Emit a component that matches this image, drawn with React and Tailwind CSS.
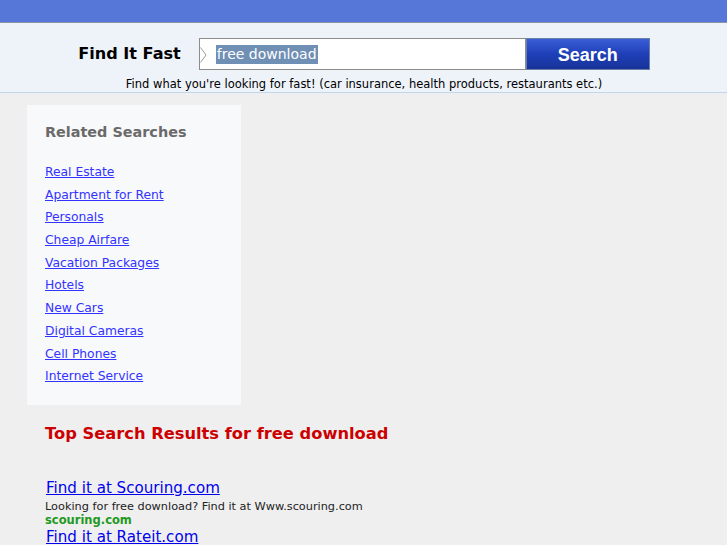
const RELATED = [
  'Real Estate',
  'Apartment for Rent',
  'Personals',
  'Cheap Airfare',
  'Vacation Packages',
  'Hotels',
  'New Cars',
  'Digital Cameras',
  'Cell Phones',
  'Internet Service',
];

const RESULTS = [
  { title: 'Find it at Scouring.com', desc: 'Looking for free download? Find it at Www.scouring.com', url: 'scouring.com' },
  { title: 'Find it at Rateit.com', desc: 'Looking for free download? Find it at Www.rateit.com', url: 'rateit.com' },
];

export default function App() {
  return (
    <div className="bg-[#efefef] font-['DejaVu_Sans',sans-serif] overflow-hidden h-[545px]">
      {/* Top bar */}
      <div className="h-[23px] bg-[#5677d8] border-b border-[#8a93a8]" />

      {/* Search header */}
      <div className="h-[70px] bg-[#eef3fa] border-b border-[#c4d6ee] flex flex-col items-center">
        <div className="flex items-center mt-[15px] ml-[1px]">
          <span className="text-[16.1px] font-bold text-black mr-[18px]">Find It Fast</span>
          <div className="relative w-[327px] h-[32px] bg-white border border-[#8c8c8c] flex items-center">
            <svg className="absolute left-0 top-[8px]" width="8" height="16" viewBox="0 0 8 16">
              <path d="M0.5 0.5 L6 8 L0.5 15.5" fill="none" stroke="#9a9a9a" strokeWidth="1" />
            </svg>
            <span className="ml-[16px] text-[14px] text-white bg-[#6f8fb5] leading-[19px] px-[1px]">free download</span>
          </div>
          <button className="w-[124px] h-[32px] bg-gradient-to-b from-[#3a5ed6] via-[#1f3fb8] to-[#173399] border border-[#6b7ea8] text-white font-bold text-[18px] pt-[2px] font-['Liberation_Sans',sans-serif]">
            Search
          </button>
        </div>
        <p className="text-[11.5px] text-black mt-[6px] ml-[1px]">
          Find what you're looking for fast! (car insurance, health products, restaurants etc.)
        </p>
      </div>

      <div className="px-[27px] pt-[12px]">
        {/* Related searches */}
        <div className="w-[214px] bg-[#f8f9fb] pl-[18px] pt-[17px] pb-[18px]">
          <h3 className="text-[14.4px] font-bold text-[#6a6a6a] leading-[20px]">Related Searches</h3>
          <ul className="mt-[18px] flex flex-col">
            {RELATED.map((r) => (
              <li key={r} className="h-[22.7px] leading-[22px]">
                <a href="#" className="text-[12.3px] text-[#3333ff] underline">{r}</a>
              </li>
            ))}
          </ul>
        </div>

        {/* Results */}
        <div className="pl-[18px] pt-[18px]">
          <h2 className="text-[16.3px] font-bold text-[#cc0000] leading-[22px]">Top Search Results for free download</h2>
          <div className="mt-[34px] flex flex-col">
            {RESULTS.map((r) => (
              <div key={r.title} className="flex flex-col">
                <a href="#" className="text-[15.1px] text-[#0000ee] underline leading-[19px] ml-[1px]">{r.title}</a>
                <span className="text-[11.3px] text-[#222] leading-[17px]">{r.desc}</span>
                <span className="text-[11.5px] font-bold text-[#229922] leading-[11px] mb-[2px]">{r.url}</span>
              </div>
            ))}
          </div>
        </div>
      </div>
    </div>
  );
}
